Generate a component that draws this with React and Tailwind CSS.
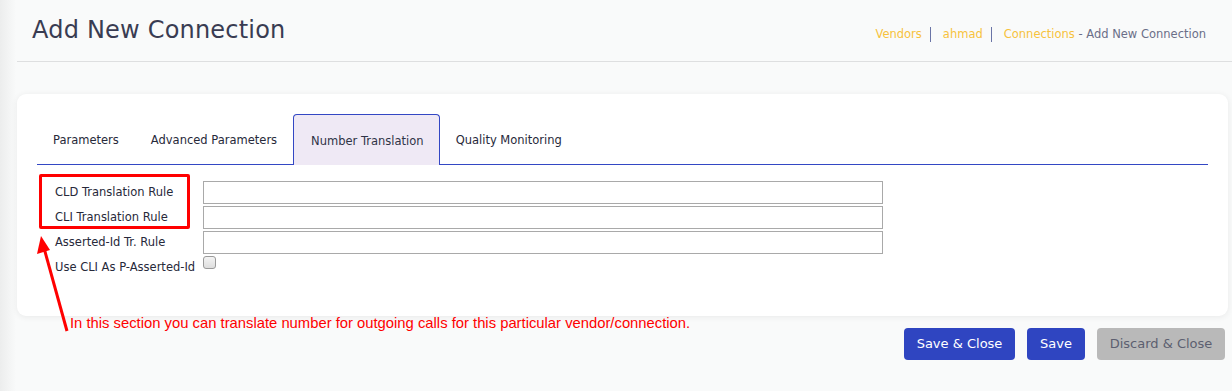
import React from "react";

const tabs = ["Parameters", "Advanced Parameters", "Number Translation", "Quality Monitoring"];

const rows = [
  { label: "CLD Translation Rule", type: "text" },
  { label: "CLI Translation Rule", type: "text" },
  { label: "Asserted-Id Tr. Rule", type: "text" },
  { label: "Use CLI As P-Asserted-Id", type: "checkbox" },
];

const App = () => {
  return (
    <div
      className="relative w-[1232px] h-[391px] overflow-hidden bg-[#f9fafa] text-[#333]"
      style={{ fontFamily: '"DejaVu Sans", Verdana, sans-serif' }}
    >
      {/* left edge shade */}
      <div className="absolute left-0 top-0 h-full w-[16px] bg-gradient-to-r from-[#eceded] to-[#f9fafa]" />

      <header className="relative ml-[17px] h-[62px] border-b border-[#dedfe0] flex items-center justify-between pl-[15px] pr-[26px]">
        <h1 className="text-[24px] text-[#393c52] tracking-[0.2px] -mt-[1px]">Add New Connection</h1>
        <nav className="flex items-center text-[11.5px] mt-[8px]">
          <span className="text-[#f7c23d]">Vendors</span>
          <span className="ml-[8px] mr-[12px] h-[15px] w-px bg-[#6a74a6]" />
          <span className="text-[#f7c23d]">ahmad</span>
          <span className="ml-[8px] mr-[12px] h-[15px] w-px bg-[#6a74a6]" />
          <span className="text-[#f7c23d]">Connections</span>
          <span className="text-[#6b6f88]">&nbsp;- Add New Connection</span>
        </nav>
      </header>

      <main className="relative ml-[17px] mr-[4px] mt-[32px] bg-white rounded-[9px] shadow-[0_1px_6px_rgba(0,0,0,0.07)] px-[20px] pt-[20px] pb-[36px]">
        <div className="flex border-b border-[#3347c4] text-[11.5px]">
          {tabs.map((t) =>
            t === "Number Translation" ? (
              <div
                key={t}
                className="-mb-px h-[51px] flex items-center pl-[17px] pr-[15px] pt-[4px] bg-[#efe9f5] border border-b-0 border-[#3347c4] rounded-t-[4px] text-[#2f3447]"
              >
                {t}
              </div>
            ) : (
              <div key={t} className="h-[50px] flex items-center px-[16px] pt-[3px] text-[#27293a]">
                {t}
              </div>
            )
          )}
        </div>

        <div className="relative pt-[15px] text-[11.5px]">
          <div className="absolute left-[2px] top-[9px] w-[151px] h-[55px] border-[3px] border-[#ff0000] rounded-[2px]" />
          {rows.map((r) => (
            <div key={r.label} className="flex items-center h-[25px]">
              <label className="w-[166px] pl-[18px] text-[#27293a] whitespace-nowrap">{r.label}</label>
              {r.type === "text" ? (
                <input className="w-[680px] h-[23px] border border-[#a9a9a9] bg-white outline-none" />
              ) : (
                <span className="self-start mt-[1px] w-[13px] h-[13px] rounded-[3px] border border-[#9a9a9a] bg-gradient-to-b from-[#f4f4f4] to-[#dedede]" />
              )}
            </div>
          ))}
        </div>
      </main>

      <div className="relative flex justify-between items-start pr-[7px]">
        <p
          className="pl-[70px] text-[14.8px] leading-[15px] text-[#ff0000]"
          style={{ fontFamily: '"Liberation Sans", Arial, sans-serif' }}
        >
          In this section you can translate number for outgoing calls for this particular vendor/connection.
        </p>
        <div className="flex gap-[12px] mt-[12px] text-[13px]">
          <button className="h-[32px] w-[111px] rounded-[4px] bg-[#2f45c1] text-white">Save &amp; Close</button>
          <button className="h-[32px] w-[58px] rounded-[4px] bg-[#2f45c1] text-white">Save</button>
          <button className="h-[32px] w-[128px] rounded-[4px] bg-[#b9b9b9] text-[#5c5f70]">Discard &amp; Close</button>
        </div>
      </div>

      {/* annotation arrow */}
      <svg className="absolute left-0 top-0 pointer-events-none" width="120" height="391">
        <line x1="67" y1="331" x2="44" y2="248" stroke="#ff0000" strokeWidth="3" />
        <polygon points="41,236 37,254 50,250" fill="#ff0000" />
      </svg>
    </div>
  );
};

export default App;
